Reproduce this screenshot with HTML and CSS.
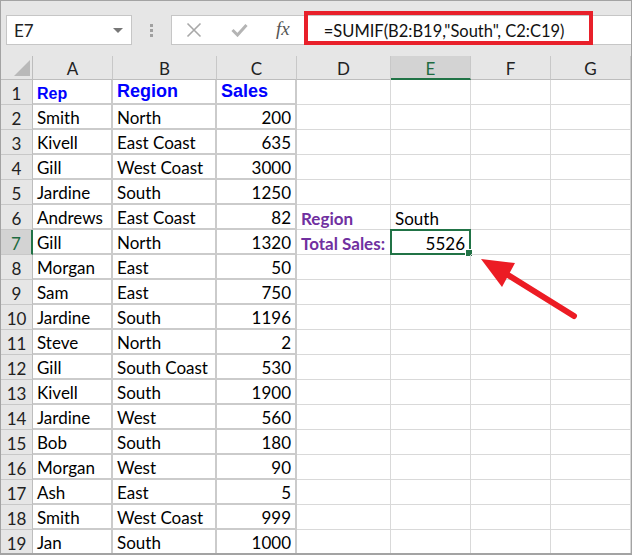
FILE: index.html
```html
<!DOCTYPE html>
<html>
<head>
<meta charset="utf-8">
<link rel="stylesheet" href="styles.css">
</head>
<body>
<div class="frame">
  <div class="toolbar">
    <div class="namebox"><span>E7</span><span class="caret"></span></div>
    <div class="grip"><i></i><i></i><i></i></div>
    <div class="fbar">
      <svg class="ico x" width="16" height="16" viewBox="0 0 16 16"><path d="M1.5 1.5 L14.5 14.5 M14.5 1.5 L1.5 14.5" stroke="#a8a8a8" stroke-width="1.6" fill="none"/></svg>
      <svg class="ico ok" width="17" height="14" viewBox="0 0 17 14"><path d="M1.5 7 L6.5 12 L15.5 2" stroke="#b4b4b4" stroke-width="3" fill="none"/></svg>
      <span class="fx">fx</span>
      <span class="formula">=SUMIF(B2:B19,"South", C2:C19)</span>
    </div>
  </div>
  <div class="redbox"></div>
  <div class="sheet">
    <div class="corner"><span class="tri"></span></div>
    <div class="ch">A</div><div class="ch">B</div><div class="ch">C</div><div class="ch">D</div><div class="ch sel">E</div><div class="ch">F</div><div class="ch">G</div>

    <div class="rh">1</div><div class="c t h1 rep">Rep</div><div class="c t h1">Region</div><div class="c t h1">Sales</div><div class="c"></div><div class="c"></div><div class="c"></div><div class="c"></div>
    <div class="rh">2</div><div class="c t">Smith</div><div class="c t">North</div><div class="c t n">200</div><div class="c"></div><div class="c"></div><div class="c"></div><div class="c"></div>
    <div class="rh">3</div><div class="c t">Kivell</div><div class="c t">East Coast</div><div class="c t n">635</div><div class="c"></div><div class="c"></div><div class="c"></div><div class="c"></div>
    <div class="rh">4</div><div class="c t">Gill</div><div class="c t">West Coast</div><div class="c t n">3000</div><div class="c"></div><div class="c"></div><div class="c"></div><div class="c"></div>
    <div class="rh">5</div><div class="c t">Jardine</div><div class="c t">South</div><div class="c t n">1250</div><div class="c"></div><div class="c"></div><div class="c"></div><div class="c"></div>
    <div class="rh">6</div><div class="c t">Andrews</div><div class="c t">East Coast</div><div class="c t n">82</div><div class="c lab">Region</div><div class="c">South</div><div class="c"></div><div class="c"></div>
    <div class="rh rsel">7</div><div class="c t">Gill</div><div class="c t">North</div><div class="c t n">1320</div><div class="c lab">Total Sales:</div><div class="c n active">5526<span class="handle"></span></div><div class="c"></div><div class="c"></div>
    <div class="rh">8</div><div class="c t">Morgan</div><div class="c t">East</div><div class="c t n">50</div><div class="c"></div><div class="c"></div><div class="c"></div><div class="c"></div>
    <div class="rh">9</div><div class="c t">Sam</div><div class="c t">East</div><div class="c t n">750</div><div class="c"></div><div class="c"></div><div class="c"></div><div class="c"></div>
    <div class="rh">10</div><div class="c t">Jardine</div><div class="c t">South</div><div class="c t n">1196</div><div class="c"></div><div class="c"></div><div class="c"></div><div class="c"></div>
    <div class="rh">11</div><div class="c t">Steve</div><div class="c t">North</div><div class="c t n">2</div><div class="c"></div><div class="c"></div><div class="c"></div><div class="c"></div>
    <div class="rh">12</div><div class="c t">Gill</div><div class="c t">South Coast</div><div class="c t n">530</div><div class="c"></div><div class="c"></div><div class="c"></div><div class="c"></div>
    <div class="rh">13</div><div class="c t">Kivell</div><div class="c t">South</div><div class="c t n">1900</div><div class="c"></div><div class="c"></div><div class="c"></div><div class="c"></div>
    <div class="rh">14</div><div class="c t">Jardine</div><div class="c t">West</div><div class="c t n">560</div><div class="c"></div><div class="c"></div><div class="c"></div><div class="c"></div>
    <div class="rh">15</div><div class="c t">Bob</div><div class="c t">South</div><div class="c t n">180</div><div class="c"></div><div class="c"></div><div class="c"></div><div class="c"></div>
    <div class="rh">16</div><div class="c t">Morgan</div><div class="c t">West</div><div class="c t n">90</div><div class="c"></div><div class="c"></div><div class="c"></div><div class="c"></div>
    <div class="rh">17</div><div class="c t">Ash</div><div class="c t">East</div><div class="c t n">5</div><div class="c"></div><div class="c"></div><div class="c"></div><div class="c"></div>
    <div class="rh">18</div><div class="c t">Smith</div><div class="c t">West Coast</div><div class="c t n">999</div><div class="c"></div><div class="c"></div><div class="c"></div><div class="c"></div>
    <div class="rh">19</div><div class="c t">Jan</div><div class="c t">South</div><div class="c t n">1000</div><div class="c"></div><div class="c"></div><div class="c"></div><div class="c"></div>
  </div>
  <svg class="arrow" width="632" height="555" viewBox="0 0 632 555">
    <path d="M574 316 L500 270" stroke="#ec1c24" stroke-width="6" stroke-linecap="round" fill="none"/>
    <path d="M481 259 L515 263 L502 287 Z" fill="#ec1c24"/>
  </svg>
</div>
</body>
</html>
```

FILE: styles.css
```css
html, body {
  margin: 0;
  padding: 0;
  background: #ffffff;
}

.frame {
  position: relative;
  width: 632px;
  height: 555px;
  box-sizing: border-box;
  border: 1px solid #a3a3a3;
  border-bottom-width: 2px;
  background: #e6e6e6;
  overflow: hidden;
  font-family: "Lato", "Noto Sans", sans-serif;
  color: #000;
}

.toolbar {
  height: 55px;
  box-sizing: border-box;
  padding: 14px 0 0 5px;
  display: flex;
  align-items: flex-start;
}

.namebox {
  width: 126px;
  height: 30px;
  box-sizing: border-box;
  border: 1px solid #c6c6c6;
  background: #fff;
  display: flex;
  align-items: center;
  justify-content: space-between;
  padding: 1px 8px 0 7px;
  font-size: 17px;
  color: #222;
}

.caret {
  width: 0;
  height: 0;
  border-left: 5px solid transparent;
  border-right: 5px solid transparent;
  border-top: 5px solid #777;
}

.grip {
  width: 39px;
  height: 30px;
  display: flex;
  flex-direction: column;
  align-items: center;
  justify-content: center;
  gap: 2px;
}

.grip i {
  display: block;
  width: 3px;
  height: 3px;
  background: #a0a0a0;
}

.fbar {
  flex: 1;
  height: 30px;
  box-sizing: border-box;
  border: 1px solid #c6c6c6;
  border-right: none;
  background: #fff;
  display: flex;
  align-items: center;
  padding-left: 14px;
}

.ico.x {
  margin-right: 29px;
}

.ico.ok {
  margin-right: 28px;
}

.fx {
  font-family: "Liberation Serif", serif;
  font-style: italic;
  font-size: 19px;
  color: #555;
  margin-right: 34px;
  position: relative;
  top: -1px;
}

.formula {
  font-size: 16.5px;
  color: #111;
  padding-top: 1px;
}

.redbox {
  position: absolute;
  left: 303px;
  top: 10px;
  width: 289px;
  height: 34px;
  box-sizing: border-box;
  border: 4px solid #e8202a;
}

.sheet {
  display: grid;
  grid-template-columns: 32px 80px 104px 80px 94px 80px 80px 80px;
  grid-template-rows: 24px repeat(19, 25px);
  background: #fff;
}

.corner {
  background: #e6e6e6;
  border-right: 1px solid #bdbdbd;
  border-bottom: 1px solid #bdbdbd;
  position: relative;
}

.tri {
  position: absolute;
  right: 2px;
  bottom: 3px;
  width: 0;
  height: 0;
  border-left: 16px solid transparent;
  border-bottom: 16px solid #b9b9b9;
}

.ch {
  background: #e6e6e6;
  border-right: 1px solid #c8c8c8;
  border-bottom: 1px solid #bdbdbd;
  display: flex;
  align-items: center;
  justify-content: center;
  padding-top: 2px;
  font-size: 17px;
  color: #222;
}

.ch.sel {
  background: #d3d3d3;
  color: #1e6b41;
  border-bottom: 2px solid #217346;
}

.rh {
  background: #e6e6e6;
  border-right: 1px solid #bdbdbd;
  border-bottom: 1px solid #c8c8c8;
  display: flex;
  align-items: center;
  justify-content: center;
  padding-top: 2px;
  font-size: 17px;
  color: #222;
}

.rh.rsel {
  background: #d3d3d3;
  color: #1e6b41;
  border-right: 2px solid #217346;
}

.c {
  position: relative;
  box-sizing: border-box;
  border-right: 1px solid #d9d9d9;
  border-bottom: 1px solid #d9d9d9;
  display: flex;
  align-items: center;
  padding: 2px 4px 0 4px;
  font-size: 17px;
  white-space: nowrap;
  overflow: visible;
}

.c.t {
  border-right: 2px solid #cbcbcb;
  border-bottom: 2px solid #cbcbcb;
}

.c.n {
  justify-content: flex-end;
}

.h1 {
  font-family: "Liberation Sans", Arial, sans-serif;
  font-weight: bold;
  color: #0000ff;
  font-size: 18px;
  align-items: flex-start;
  padding-top: 1px;
}

.h1.rep {
  font-size: 16px;
  padding-top: 5px;
}

.lab {
  font-weight: bold;
  color: #7030a0;
}

.active {
  border: 2px solid #217346;
  margin: -1px 0 0 -1px;
}

.handle {
  position: absolute;
  right: -4px;
  bottom: -4px;
  width: 6px;
  height: 6px;
  background: #217346;
  border: 1px solid #fff;
}

.arrow {
  position: absolute;
  left: -1px;
  top: -1px;
}
```
